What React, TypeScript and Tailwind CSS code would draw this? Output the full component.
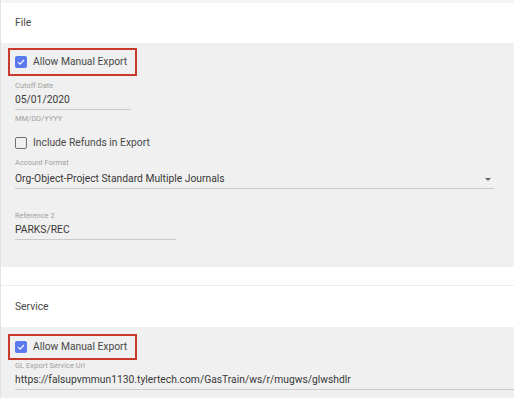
import React from 'react';

function Checkbox({ checked }: { checked: boolean }) {
  return checked ? (
    <span className="flex h-[12px] w-[12px] shrink-0 items-center justify-center rounded-[2px] bg-[#5b78ee]">
      <svg viewBox="0 0 12 12" className="h-[10px] w-[10px]">
        <path d="M2.4 6.2 L4.9 8.6 L9.6 3.6" fill="none" stroke="white" strokeWidth="1.4" />
      </svg>
    </span>
  ) : (
    <span className="h-[12px] w-[12px] shrink-0 rounded-[2px] border-[1.5px] border-[#6f6f6f]" />
  );
}

function ManualExport({ height }: { height: string }) {
  return (
    <div className={`ml-[7px] flex w-[129px] items-center gap-[6px] border-2 border-[#c93a2e] pl-[5px] ${height}`}>
      <Checkbox checked={true} />
      <span className="text-[10.3px] leading-none text-[#484848]">Allow Manual Export</span>
    </div>
  );
}

function Field({
  label,
  value,
  width,
  gap,
  select,
}: {
  label: string;
  value: string;
  width: string;
  gap: string;
  select?: boolean;
}) {
  return (
    <div className={`ml-[14px] flex flex-col ${width}`}>
      <span className="text-[7.5px] leading-[11px] text-[#a0a0a0]">{label}</span>
      <div className={`flex h-[19px] items-center justify-between border-b border-[#cbcbcb] ${gap}`}>
        <span className="whitespace-nowrap text-[10.3px] leading-[18px] text-[#383838]">{value}</span>
        {select && (
          <svg viewBox="0 0 6 3" className="mr-[3px] h-[3px] w-[6px]">
            <path d="M0 0 L6 0 L3 3 Z" fill="#666" />
          </svg>
        )}
      </div>
    </div>
  );
}

function SectionHeader({ title, height }: { title: string; height: string }) {
  return (
    <div className={`flex items-center pl-[14px] text-[10.3px] text-[#484848] ${height}`}>{title}</div>
  );
}

export default function App() {
  return (
    <div className="h-[398px] w-[514px] overflow-hidden border-l border-[#e2e2e2] bg-white font-['Roboto',sans-serif]">
      <div className="h-[3px] bg-[#f4f4f4]" />
      <SectionHeader title="File" height="h-[40px]" />
      <div className="flex h-[224px] flex-col bg-[#f0f0f0] pt-[5px]">
        <ManualExport height="h-[28px]" />
        <div className="mt-[4px]">
          <Field label="Cutoff Date" value="05/01/2020" width="w-[116px]" gap="" />
        </div>
        <span className="ml-[14px] mt-[3px] text-[7.5px] leading-[11px] text-[#a0a0a0]">MM/DD/YYYY</span>
        <div className="ml-[14px] mt-[13px] flex items-center gap-[6px]">
          <Checkbox checked={false} />
          <span className="text-[10.3px] leading-none text-[#484848]">Include Refunds in Export</span>
        </div>
        <div className="mt-[8px]">
          <Field
            label="Account Format"
            value="Org-Object-Project Standard Multiple Journals"
            width="w-[479px]"
            gap="mt-[2px]"
            select
          />
        </div>
        <div className="mt-[21px]">
          <Field label="Reference 2" value="PARKS/REC" width="w-[161px]" gap="" />
        </div>
      </div>
      <div className="h-[18px]" />
      <div className="h-px bg-[#eeeeee]" />
      <SectionHeader title="Service" height="h-[41px]" />
      <div className="flex h-[80px] flex-col bg-[#f0f0f0] pt-[7px]">
        <ManualExport height="h-[26px]" />
        <Field
          label="GL Export Service Url"
          value="https://falsupvmmun1130.tylertech.com/GasTrain/ws/r/mugws/glwshdlr"
          width="w-[520px]"
          gap=""
        />
      </div>
    </div>
  );
}
